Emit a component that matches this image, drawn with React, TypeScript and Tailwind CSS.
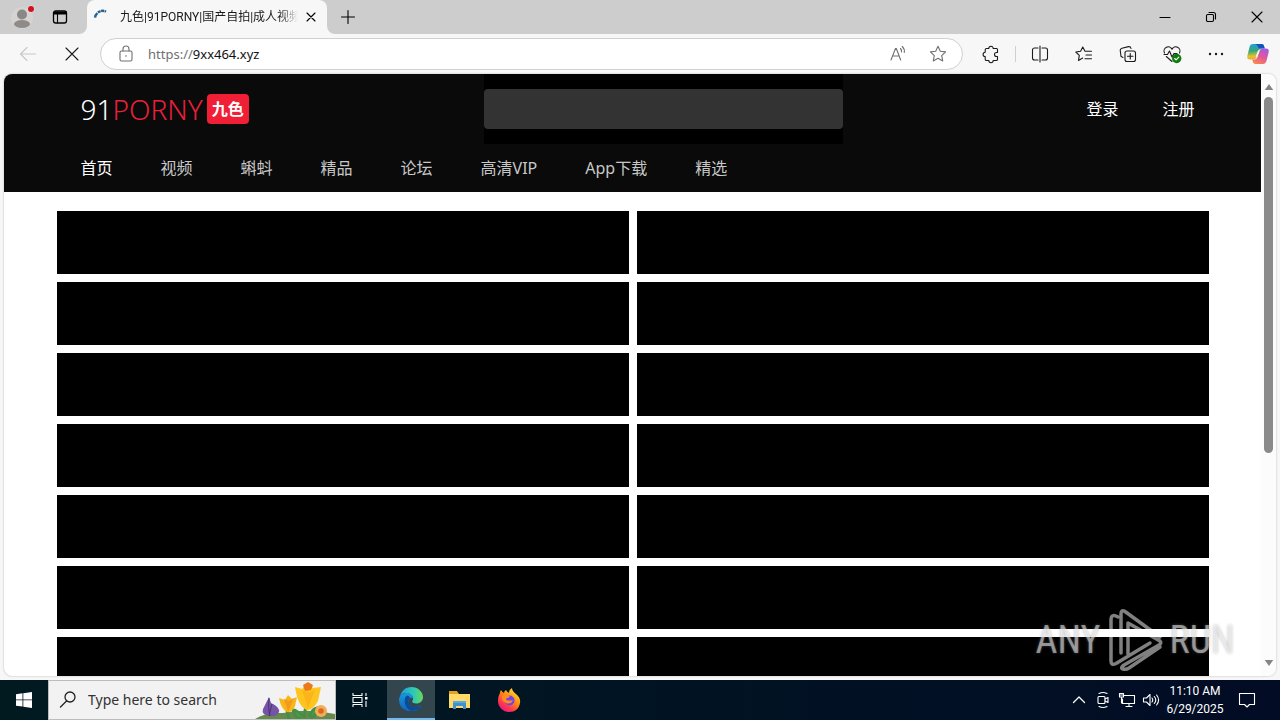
import type { ReactNode } from "react";

type IconProps = { children: ReactNode; className?: string; view?: string };

function Icon({ children, className = "h-5 w-5", view = "0 0 20 20" }: IconProps) {
  return (
    <svg
      viewBox={view}
      className={className}
      fill="none"
      stroke="currentColor"
      strokeWidth="1.1"
      strokeLinecap="round"
      strokeLinejoin="round"
      aria-hidden="true"
    >
      {children}
    </svg>
  );
}

const star = "M10 2.3l2.3 4.9 5.3.7-3.9 3.7 1 5.3L10 14.3l-4.7 2.6 1-5.3-3.9-3.7 5.3-.7z";

function ToolButton({ label, children, className = "w-11" }: { label: string; children: ReactNode; className?: string }) {
  return (
    <button aria-label={label} className={`flex h-8 shrink-0 items-center justify-center ${className}`}>
      {children}
    </button>
  );
}

function TitleBar() {
  return (
    <div className="flex h-[34px] shrink-0 bg-[#cdcdcd]">
      <button aria-label="Profile" className="ml-2 flex w-8 items-center justify-center pr-0.5">
        <svg viewBox="0 0 24 24" className="h-6 w-6" aria-hidden="true">
          <circle cx="11" cy="13" r="11" fill="#d6d3d0" />
          <circle cx="11" cy="9.5" r="5" fill="#8a8886" />
          <ellipse cx="11" cy="19" rx="8" ry="4" fill="#8f8b88" />
          <circle cx="20" cy="4" r="3.6" fill="#e3e1df" />
          <circle cx="20" cy="4" r="3" fill="#d40f1f" />
        </svg>
      </button>
      <button aria-label="Tab actions" className="flex w-10 items-center justify-center">
        <Icon className="h-4 w-4" view="0 0 16 16">
          <rect x="1.5" y="2" width="13" height="12" rx="2.2" strokeWidth="1.3" />
          <path d="M2 3.5h12M2 4.6h12" strokeWidth="1.8" />
          <path d="M5.5 4.5v9.3" />
        </Icon>
      </button>
      <div className="relative ml-[7px] flex w-60 items-center rounded-t-lg bg-[#f7f7f7]">
        <svg viewBox="0 0 8 8" className="absolute -left-2 bottom-0 h-2 w-2 fill-[#f7f7f7]" aria-hidden="true">
          <path d="M8 0v8H0a8 8 0 0 0 8-8z" />
        </svg>
        <svg viewBox="0 0 8 8" className="absolute -right-2 bottom-0 h-2 w-2 fill-[#f7f7f7]" aria-hidden="true">
          <path d="M0 0v8h8a8 8 0 0 1-8-8z" />
        </svg>
        <svg viewBox="0 0 16 16" className="ml-1.5 h-4 w-4" fill="none" aria-hidden="true">
          <path d="M2 8.6a7 7 0 0 1 2.4-4.4" stroke="#1b6aa5" strokeWidth="2.4" />
          <path d="M5 3.7A7 7 0 0 1 13 2.6" stroke="#2b6188" strokeWidth="2.4" strokeDasharray="3 .5" />
        </svg>
        <span className="ml-[11px] w-[178px] overflow-hidden whitespace-nowrap font-[Roboto,'Noto_Sans_CJK_SC',sans-serif] text-xs text-[#1b1b1b] [mask-image:linear-gradient(to_right,black_90%,transparent)]">
          九色|91PORNY|国产自拍|成人视频
        </span>
        <button aria-label="Close tab" className="flex h-6 w-[26px] items-center justify-center">
          <Icon className="h-4 w-4" view="0 0 16 16"><path d="M4 4l8 8M12 4l-8 8" /></Icon>
        </button>
      </div>
      <button aria-label="New tab" className="ml-[5px] flex w-8 items-center justify-center">
        <Icon className="h-4 w-4" view="0 0 16 16"><path d="M8 1.5v13M1.5 8h13" /></Icon>
      </button>
      <div className="flex-1" />
      <button aria-label="Minimize" className="flex w-[46px] items-center justify-center">
        <Icon className="h-3 w-3" view="0 0 12 12"><path d="M1 6.5h10" /></Icon>
      </button>
      <button aria-label="Restore" className="flex w-[46px] items-center justify-center">
        <Icon className="h-3 w-3" view="0 0 12 12">
          <rect x="1.5" y="3.5" width="7" height="7" rx="1.2" />
          <path d="M4 1.5h4.5a2 2 0 0 1 2 2V8" />
        </Icon>
      </button>
      <button aria-label="Close" className="flex w-[46px] items-center justify-center">
        <Icon className="h-3 w-3" view="0 0 12 12"><path d="M1 1l10 10M11 1L1 11" /></Icon>
      </button>
    </div>
  );
}

function Copilot() {
  return (
    <svg viewBox="0 0 24 24" className="h-6 w-6" aria-hidden="true">
      <defs>
        <linearGradient id="cpA" x1="0.2" y1="0" x2="0.3" y2="1">
          <stop offset="0" stopColor="#1d9fe0" />
          <stop offset="0.45" stopColor="#35a877" />
          <stop offset="0.8" stopColor="#e7c42b" />
          <stop offset="1" stopColor="#f3a13a" />
        </linearGradient>
        <linearGradient id="cpB" x1="0.8" y1="0" x2="0.3" y2="1">
          <stop offset="0" stopColor="#a05be8" />
          <stop offset="0.5" stopColor="#e0589c" />
          <stop offset="1" stopColor="#f98351" />
        </linearGradient>
      </defs>
      <path d="M7 2h8.500c1.400 0 2.200.9 2.600 2.200l.6 2.300h-3.300c-1.500 0-2.300 1-2.800 2.400L10.700 14.500C10 16.700 9 17.500 7 17.500H4c-2.300 0-3.300-1.500-2.600-4L3.500 5.200C4 3.200 5 2 7 2z" fill="url(#cpA)" />
      <path d="M9 2h6.500c1.400 0 2.200.9 2.600 2.200l.6 2.300h-3.300c-1.500 0-2.400.6-3-1C11.500 3.500 10.500 2.300 9 2z" fill="#1950bf" />
      <path d="M17 22H9.500c-1.400 0-2.200-.9-2.600-2.200l-.6-2.300h2.300c1.500 0 2.300-1 2.800-2.400l1.900-5.600c.7-2.200 1.700-3 3.700-3h3c2.300 0 3.300 1.500 2.600 4l-2.100 8.300C20 20.800 19 22 17 22z" fill="url(#cpB)" />
      <path d="M10.500 14.800l2.300-6.300" stroke="#f7f7f7" strokeWidth="1.500" />
    </svg>
  );
}

function Toolbar() {
  return (
    <div className="flex h-10 shrink-0 items-center bg-[#f7f7f7] pl-1.5 pr-0.5 text-[#1b1b1b]">
      <ToolButton label="Back">
        <Icon className="h-5 w-5 text-[#c8c8c8]"><path d="M17.500 10H2.500M9 3.500L2.500 10 9 16.500" /></Icon>
      </ToolButton>
      <ToolButton label="Stop loading">
        <Icon><path d="M4 4l12 12M16 4L4 16" /></Icon>
      </ToolButton>
      <div className="mx-1.5 flex h-8 min-w-0 flex-1 items-center rounded-full border border-[#d0d0d0] bg-white text-[#707070]">
        <Icon className="ml-[15px] h-5 w-5">
          <rect x="4" y="7" width="12" height="10" rx="1.500" />
          <path d="M7 7V5a3 3 0 0 1 6 0v2" />
          <circle cx="10" cy="12" r=".8" fill="currentColor" stroke="none" />
        </Icon>
        <div className="ml-3 flex min-w-0 flex-1 items-center text-[13px] leading-5">
          <span>https://</span>
          <input aria-label="Address" className="h-5 min-w-0 flex-1 bg-transparent text-[#111] outline-none" defaultValue="9xx464.xyz" />
        </div>
        <ToolButton label="Read aloud" className="w-10">
          <Icon>
            <path d="M3 16L7.500 4.500h.8L12.700 16M4.500 12h6.800" />
            <path d="M12.500 4.500a4 4 0 0 1 1 3.500M14.300 2.500a7 7 0 0 1 2 6" />
          </Icon>
        </ToolButton>
        <ToolButton label="Add to favorites" className="mr-1 w-10">
          <Icon><path d={star} /></Icon>
        </ToolButton>
      </div>
      <ToolButton label="Extensions">
        <Icon>
          <path d="M5.500 4.500h2.300a2.200 2.200 0 1 1 4.400 0h3.300A1.200 1.200 0 0 1 16.500 6v2.500h-1a2 2 0 0 0 0 4h1v2.700a1.300 1.300 0 0 1-1.300 1.300h-3a2.200 2.200 0 0 1-4.400 0H5.500a1.300 1.300 0 0 1-1.300-1.300v-2.700a2.100 2.100 0 0 1 0-4.200V5.800a1.300 1.300 0 0 1 1.300-1.300z" />
        </Icon>
      </ToolButton>
      <div className="mx-0.5 h-4 w-px bg-[#cfcfcf]" />
      <ToolButton label="Split screen">
        <Icon>
          <path d="M7.500 4H4.500A2 2 0 0 0 2.500 6v8a2 2 0 0 0 2 2H7.500V4M12.500 4H15.500a2 2 0 0 1 2 2v8a2 2 0 0 1-2 2H12.500V4" className="hidden" />
          <path d="M8 4H4.500a2 2 0 0 0-2 2v8a2 2 0 0 0 2 2H8M12 4h3.500a2 2 0 0 1 2 2v8a2 2 0 0 1-2 2H12M10 2v16" />
        </Icon>
      </ToolButton>
      <ToolButton label="Favorites">
        <Icon>
          <path d="M11 7.300L8.800 3 6.600 7.300l-4.800.7 3.500 3.400-.8 5 4.200-2.300M11 7.300h6.500M12 11h5.500M11 14.800h6.500" />
        </Icon>
      </ToolButton>
      <ToolButton label="Collections">
        <Icon>
          <rect x="7" y="7" width="10.500" height="10.500" rx="2" />
          <path d="M12.250 9.500v5.500M9.500 12.250H15M5 13.500l-1-.4a2 2 0 0 1-1.200-2.400L2.300 7A2.300 2.300 0 0 1 4 4.200l6.500-1.600A2.300 2.300 0 0 1 13 4.500" />
        </Icon>
      </ToolButton>
      <ToolButton label="Browser essentials">
        <Icon>
          <path d="M2.500 9A4 4 0 0 1 10 5.200 4 4 0 0 1 17.500 9M4.300 12.500l5.700 5M2 10.500h3.500l2-3.500 2.500 6 2-3.500h3" />
          <circle cx="14.700" cy="14.500" r="4.700" fill="#107c10" stroke="none" />
          <path d="M12.700 14.500l1.400 1.400 2.700-2.700" stroke="white" />
        </Icon>
      </ToolButton>
      <ToolButton label="Settings and more">
        <Icon>
          <g fill="currentColor" stroke="none">
            <circle cx="4" cy="10" r="1.200" />
            <circle cx="10" cy="10" r="1.200" />
            <circle cx="16" cy="10" r="1.200" />
          </g>
        </Icon>
      </ToolButton>
      <ToolButton label="Copilot" className="w-10"><Copilot /></ToolButton>
    </div>
  );
}

const links = ["首页", "视频", "蝌蚪", "精品", "论坛", "高清VIP", "App下载", "精选"];

function SiteHeader() {
  return (
    <header className="h-[118px] shrink-0 bg-[#0a0a0a] text-base text-white">
      <div className="mx-auto w-full max-w-[1152px] pl-6">
        <div className="flex h-[70px] items-center justify-between">
          <a href="#" className="flex items-center gap-1">
            <span className="text-[28px] font-light leading-10">
              91<span className="text-[#e8203a]">PORNY</span>
            </span>
            <span className="flex h-[30px] w-[42px] items-center justify-center rounded bg-[#f01f36] font-bold">九色</span>
          </a>
          <div className="flex h-[70px] w-[359px] items-center bg-black">
            <input aria-label="搜索" className="h-10 w-full rounded bg-[#333] px-3 outline-none" />
          </div>
          <div className="flex justify-end gap-11 pl-2 pr-3.5">
            <a href="#">登录</a>
            <a href="#">注册</a>
          </div>
        </div>
        <nav className="flex h-12 items-center gap-12 text-[#c8c8c8]">
          {links.map((text, i) => (
            <a key={text} href="#" className={i === 0 ? "text-white" : ""}>{text}</a>
          ))}
        </nav>
      </div>
    </header>
  );
}

function Scrollbar() {
  return (
    <div className="flex w-[15px] shrink-0 flex-col items-center bg-[#fcfcfc] py-2 text-[#858585]">
      <svg viewBox="0 0 10 7" className="mb-[7px] mt-0.5 h-[6px] w-[10px] shrink-0 fill-current" aria-hidden="true"><path d="M5 0l5 7H0z" /></svg>
      <div className="min-h-0 w-full flex-1">
        <div className="mx-auto h-[64%] w-[9px] rounded-full bg-[#8a8a8a]" />
      </div>
      <svg viewBox="0 0 10 7" className="mb-0.5 mt-1.5 h-[6px] w-[10px] shrink-0 fill-current" aria-hidden="true"><path d="M0 0h10L5 7z" /></svg>
    </div>
  );
}

function Watermark() {
  return (
    <div className="pointer-events-none absolute bottom-1 right-[41px] flex h-[64px] items-center gap-1.5 font-['Roboto_Condensed','Open_Sans_Condensed','Liberation_Sans_Narrow','Liberation_Sans',sans-serif] text-[38px] text-white/50 [text-shadow:0_0_3px_#80808080]">
      <span className="w-[66px] text-center">ANY</span>
      <svg viewBox="0 0 56 64" className="h-16 w-14" fill="none" stroke="currentColor" strokeLinejoin="round" strokeLinecap="round" aria-hidden="true">
        <path d="M11 9Q4 5 4 12v41q0 5 5 2.500L43 35M14 45V6q0-5 4-2.500L53 29M21 46V15L53 33q2 2-1 4L17 57q-4 3-1 4 3 1 6-1L53 39" strokeWidth="3.500" />
      </svg>
      <span className="w-[66px] text-center">RUN</span>
    </div>
  );
}

function Flowers() {
  return (
    <svg viewBox="0 0 80 38" className="h-full w-20 shrink-0" aria-hidden="true">
      <path d="M0 38q10-7 28-6 25-5 52 1v5z" fill="#648b4d" />
      <path d="M34 38l-3-13M49 37l3-20M48 36q-7-8-10-7 2 8 8 9M54 36q4-10 9-9-1 8-8 10" stroke="#458e43" strokeWidth="3" fill="#539c45" />
      <path d="M14 16l2 6q9 4 8 9-2 5-9 4-9-1-7-7z" fill="#7654a5" />
      <path d="M14 17q-1 12 1 18M17 23l-3 12" stroke="#493075" fill="none" />
      <path d="M24 17l6 2 3-5 4 4 5-2-2 9q-3 7-8 6-6-3-8-14z" fill="#f8b717" />
      <path d="M29 18l4 13 6-14-5 3z" fill="#f29a1e" />
      <path d="M40 6l7 2 5-6 6 5 8-1-3 14q-5 9-11 9-9-3-12-23z" fill="#ffc51f" />
      <path d="M48 4l5-3 5 3-2 5-6 1z" fill="#ee791c" />
      <path d="M47 9l6 18 7-18-6 3z" fill="#fbb41a" />
      <circle cx="66" cy="30" r="6" fill="#f2ad5b" />
      <circle cx="66" cy="30" r="2.800" fill="#db681d" />
    </svg>
  );
}

function Edge() {
  return (
    <svg viewBox="0 0 24 24" className="h-6 w-6" aria-hidden="true">
      <defs>
        <linearGradient id="edA"><stop stopColor="#209edb" /><stop offset=".6" stopColor="#2fc9b5" /><stop offset="1" stopColor="#68d957" /></linearGradient>
        <linearGradient id="edB" x1="0" y1="0" x2="0" y2="1"><stop stopColor="#159ae0" /><stop offset="1" stopColor="#1262b8" /></linearGradient>
      </defs>
      <path d="M1 10C2 4 6.500 0 12.500 0 19 0 24 5 24 10c0 4-3 6.500-6.500 6.500-3 0-4.300-1-4.300-2 0-.8.8-1 .8-3C14 8 10 6 7 6c-3.500 0-5.500 2-6 4z" fill="url(#edA)" />
      <path d="M0 13c0-4 3.500-7 7.500-7C11 6 14 8.500 14 11.500c-1-1.500-4-1-4.500 2-.8 4.500 4 8 8.500 6.500 2-.6 3-1.500 3.700-1.200.5.200.1 1-.7 1.700A12 12 0 0 1 0 13z" fill="url(#edB)" />
      <path d="M8 8.500c-4 3-3 12 4 15.300 3.500.3 7-1 9-3.300.8-.9 1.200-1.500.7-1.700-5 2.700-10.500 1.500-12-2.800-.8-2.500.2-4.500 1.500-5C10.500 9.500 9 8.500 8 8.500z" fill="#0d4a97" />
    </svg>
  );
}

function Explorer() {
  return (
    <svg viewBox="0 0 24 24" className="h-6 w-6" aria-hidden="true">
      <path d="M1 3h8l2 3h10v4H1z" fill="#e6a21a" />
      <path d="M1 6h21v14H1z" fill="#ffda69" />
      <path d="M5 13h13v8h-3v-3H8v3H5z" fill="#3f91d0" />
      <path d="M5 13h13v2H5z" fill="#56acdf" />
    </svg>
  );
}

function Firefox() {
  return (
    <svg viewBox="0 0 24 24" className="h-6 w-6" aria-hidden="true">
      <defs>
        <linearGradient id="ffA" x1="0.900" y1="0" x2="0.200" y2="1"><stop stopColor="#fff44f" /><stop offset=".4" stopColor="#ff980e" /><stop offset=".75" stopColor="#ff3750" /><stop offset="1" stopColor="#e3138d" /></linearGradient>
      </defs>
      <path d="M3 5q0-2 1-3 1 2 3 3 0-2 2-3 1 2 3 3-.5-3 3-5 0 3 4 6 5 4 4 9c-1 6-5 9-11 9S1 19 1 13c0-4 1-6 2-8z" fill="url(#ffA)" />
      <circle cx="12.500" cy="12.500" r="5" fill="#7542e5" />
      <path d="M5 8q4-3 8 0-1 2-4 2.500 0 2.500 4 2 2 0 3-.5-2 5-7 3-5-2-4-7z" fill="#ff8a1e" />
    </svg>
  );
}

function Taskbar() {
  return (
    <footer className="flex h-10 shrink-0 items-center bg-linear-to-r from-[#001a20] to-[#020c25] text-white">
      <button aria-label="Start" className="flex h-full w-12 items-center justify-center">
        <svg viewBox="0 0 16 16" className="h-4 w-4 fill-white" aria-hidden="true">
          <path d="M0 2.200l6.500-.9v6.200H0zM7.300 1.200L16 0v7.500H7.300zM0 8.300h6.500v6.300L0 13.700zM7.300 8.300H16V16l-8.700-1.300z" />
        </svg>
      </button>
      <div className="flex h-full w-72 items-center border border-[#bcbcbc] bg-[#f2f2f2] text-[#222]">
        <Icon className="ml-[9px] h-5 w-5 shrink-0">
          <circle cx="12" cy="7" r="5" strokeWidth="1.300" />
          <path d="M8.500 11l-6 6" strokeWidth="1.300" />
        </Icon>
        <input aria-label="Search" className="ml-2.5 min-w-0 flex-1 bg-transparent text-sm outline-none placeholder:text-[#333]" placeholder="Type here to search" />
        <Flowers />
      </div>
      <button aria-label="Task view" className="flex h-full w-12 items-center justify-center">
        <Icon className="h-5 w-5">
          <path d="M3 3v2.500h9V3M3 17v-2.500h9V17M3 7.500h9v5H3zM16 3v3M16 11v6" strokeLinecap="butt" />
          <path d="M15 7h2.500v2.500H15z" fill="currentColor" stroke="none" />
        </Icon>
      </button>
      <button aria-label="Microsoft Edge" className="ml-[3px] flex h-full w-12 items-center justify-center border-b-2 border-[#76b9ed] bg-[#34464d]"><Edge /></button>
      <button aria-label="File Explorer" className="flex h-full w-[49px] items-center justify-center"><Explorer /></button>
      <button aria-label="Firefox" className="flex h-full w-[49px] items-center justify-center"><Firefox /></button>
      <div className="flex-1" />
      <button aria-label="Show hidden icons" className="flex h-full w-6 items-center justify-center">
        <Icon className="h-4 w-4" view="0 0 16 16"><path d="M2.500 10.500L8 5l5.500 5.500" strokeWidth="1.300" /></Icon>
      </button>
      <button aria-label="Meet now" className="flex h-full w-6 items-center justify-center">
        <Icon className="h-[18px] w-[18px]" view="0 0 18 18">
          <rect x="4" y="5.500" width="7" height="7" rx="1" />
          <path d="M11 8l3-1.500v5L11 10M5 2.500q4-2 8 0M5 15.500q4 2 8 0" />
        </Icon>
      </button>
      <button aria-label="Network" className="flex h-full w-6 items-center justify-center">
        <Icon className="h-[18px] w-[18px]" view="0 0 18 18">
          <path d="M6 4.500h10.500v8h-12V8M8 15.500h6M11 12.500v3M1.500 2.500h4v3.500h-4zM3.500 6v6M2.500 4h2" />
        </Icon>
      </button>
      <button aria-label="Volume" className="flex h-full w-6 items-center justify-center">
        <Icon className="h-[18px] w-[18px]" view="0 0 18 18">
          <path d="M1.500 7h3L8 3.500v11L4.500 11h-3zM10 7q1.500 2 0 4M12.300 5.500q3 3.500 0 7M14.600 4q4 5 0 10" />
        </Icon>
      </button>
      <button className="w-16 text-center font-[Roboto,sans-serif] text-xs leading-[18px]">11:10 AM<br />6/29/2025</button>
      <button aria-label="Notifications" className="mr-[13px] flex h-full w-10 items-center justify-center">
        <Icon className="h-[18px] w-[18px]" view="0 0 18 18">
          <path d="M1.500 2.500h15v11H11.500L9 16l-2.500-2.500h-5z" />
        </Icon>
      </button>
    </footer>
  );
}

export default function App() {
  return (
    <div className="flex h-screen flex-col overflow-hidden bg-[#f7f7f7] font-['Noto_Sans','Noto_Sans_CJK_SC',sans-serif]">
      <TitleBar />
      <Toolbar />
      <main className="relative mx-1 mb-1 flex min-h-0 flex-1 overflow-hidden rounded-lg bg-white shadow-[0_0_2px_#aaa]">
        <div className="flex min-w-0 flex-1 flex-col overflow-hidden">
          <SiteHeader />
          <div className="mx-auto mt-[19px] grid w-full max-w-[1152px] auto-rows-[63px] grid-cols-2 gap-2">
            {Array.from({ length: 14 }, (_, i) => (
              <a key={i} href="#" aria-label={`Banner ${i + 1}`} className="bg-black" />
            ))}
          </div>
        </div>
        <Scrollbar />
        <Watermark />
      </main>
      <Taskbar />
    </div>
  );
}
